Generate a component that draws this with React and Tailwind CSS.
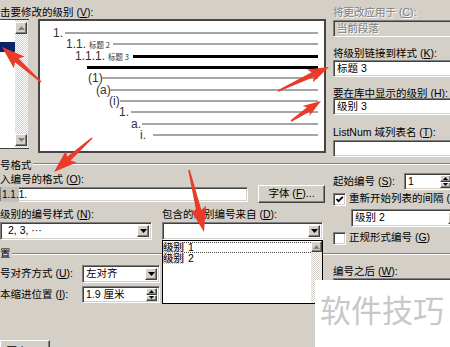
import React from 'react';

const sunken =
  'border border-t-[#808080] border-l-[#808080] border-b-white border-r-white shadow-[inset_1px_1px_0_#404040,inset_-1px_-1px_0_#d4d0c8]';
const raised =
  'border border-t-white border-l-white border-b-[#404040] border-r-[#404040] shadow-[inset_-1px_-1px_0_#808080]';
const checker =
  'bg-[image:repeating-conic-gradient(#ffffff_0%_25%,#d4d0c8_0%_50%)] bg-[length:2px_2px]';

const Tri = ({ up, color = '#000' }) => (
  <svg width="7" height="4" viewBox="0 0 7 4">
    <path d={up ? 'M0 4 L3.5 0 L7 4 Z' : 'M0 0 L7 0 L3.5 4 Z'} fill={color} />
  </svg>
);

const ArrowBtn = ({ up, color }) => (
  <div className={`${raised} bg-[#d4d0c8] w-[12px] h-[12px] shrink-0 flex items-center justify-center`}>
    <Tri up={up} color={color} />
  </div>
);

const Dropdown = ({ children, className = '' }) => (
  <div className={`${sunken} bg-white h-[18px] flex items-center pl-[3px] pr-[2px] ${className}`}>
    <span className="flex-1 overflow-hidden">{children}</span>
    <ArrowBtn />
  </div>
);

const Spin = ({ children, className = '' }) => (
  <div className={`${sunken} bg-white h-[17px] flex items-center pl-[3px] pr-[2px] ${className}`}>
    <span className="flex-1 overflow-hidden">{children}</span>
    <div className="flex flex-col w-[11px] h-[13px]">
      <div className={`${raised} flex-1 bg-[#d4d0c8] flex items-center justify-center`}>
        <svg width="5" height="3" viewBox="0 0 5 3"><path d="M0 3 L2.5 0 L5 3 Z" fill="#000" /></svg>
      </div>
      <div className={`${raised} flex-1 bg-[#d4d0c8] flex items-center justify-center`}>
        <svg width="5" height="3" viewBox="0 0 5 3"><path d="M0 0 L5 0 L2.5 3 Z" fill="#000" /></svg>
      </div>
    </div>
  </div>
);

const Check = ({ on }) => (
  <div className={`${sunken} bg-white w-[13px] h-[13px] shrink-0 flex items-center justify-center`}>
    {on && (
      <svg width="9" height="9" viewBox="0 0 9 9">
        <path d="M1.5 4 L3.5 6.2 L7.8 1.8" stroke="#000" strokeWidth="1.8" fill="none" />
      </svg>
    )}
  </div>
);

const Line = ({ dark }) =>
  dark ? <div className="flex-1 h-[3px] bg-black" /> : <div className="flex-1 h-[2px] bg-[#a6a6a6]" />;

const Preview = () => (
  <div className="ml-[9px] w-[288px] h-[134px] shrink-0 border-2 border-[#454545] bg-white pt-[6px] pr-[6px] flex flex-col font-['Liberation_Sans',sans-serif] text-[12px] text-[#333] leading-none">
    <div className="flex items-center h-[12px] pl-[13px]">
      <span className="w-[12px] shrink-0">1.</span>
      <Line />
    </div>
    <div className="flex items-center h-[10px] pl-[26px]">
      <span className="w-[47px] shrink-0">
        1.1.<span className="ml-[3px] text-[7.5px] font-['Noto_Sans_CJK_SC',sans-serif]">标题 2</span>
      </span>
      <Line />
    </div>
    <div className="flex items-center h-[14px] pl-[35px]">
      <span className="w-[58px] shrink-0">
        1.1.1.<span className="ml-[3px] text-[7.5px] font-['Noto_Sans_CJK_SC',sans-serif]">标题 3</span>
      </span>
      <Line dark />
    </div>
    <div className="flex items-center h-[8px] pl-[47px]">
      <Line dark />
    </div>
    <div className="flex items-center h-[14px] pl-[48px]">
      <span className="w-[14px] shrink-0">(1)</span>
      <Line />
    </div>
    <div className="flex items-center h-[10px] pl-[56px]">
      <span className="w-[14px] shrink-0">(a)</span>
      <Line />
    </div>
    <div className="flex items-center h-[12px] pl-[69px]">
      <span className="w-[11px] shrink-0">(i)</span>
      <Line />
    </div>
    <div className="flex items-center h-[10px] pl-[79px]">
      <span className="w-[12px] shrink-0">1.</span>
      <Line />
    </div>
    <div className="flex items-center h-[14px] pl-[91px]">
      <span className="w-[11px] shrink-0">a.</span>
      <Line />
    </div>
    <div className="flex items-center h-[8px] pl-[100px]">
      <span className="w-[13px] shrink-0">i.</span>
      <Line />
    </div>
  </div>
);

const LevelList = () => (
  <div className="w-[29px] h-[130px] shrink-0 flex border-y border-[#404040]">
    <div className="w-[15px] bg-white pt-[22px]">
      <div className="h-[10px] bg-[#0a246a]" />
    </div>
    <div className={`w-[13px] flex flex-col py-[2px] ${checker}`}>
      <ArrowBtn up color="#808080" />
      <div className="flex-1" />
      <ArrowBtn color="#808080" />
    </div>
  </div>
);

const arrowPoints = (x1, y1, x2, y2, hl, hw) => {
  const dx = x2 - x1;
  const dy = y2 - y1;
  const len = Math.hypot(dx, dy);
  const ux = dx / len;
  const uy = dy / len;
  const px = -uy;
  const py = ux;
  const bx = x2 - ux * hl;
  const by = y2 - uy * hl;
  const p = (x, y) => `${x.toFixed(1)},${y.toFixed(1)}`;
  return [
    p(x1 + px * 0.8, y1 + py * 0.8),
    p(bx + px * 2.6, by + py * 2.6),
    p(bx - ux * 3 + px * hw, by - uy * 3 + py * hw),
    p(x2, y2),
    p(bx - ux * 3 - px * hw, by - uy * 3 - py * hw),
    p(bx - px * 2.6, by - py * 2.6),
    p(x1 - px * 0.8, y1 - py * 0.8),
  ].join(' ');
};

const ARROWS = [
  [41, 82, 2, 47, 20, 8],
  [92, 138, 54, 172, 20, 8],
  [278, 91, 329, 67, 18, 7],
  [291, 121, 321, 101, 15, 6],
  [189, 170, 204, 232, 22, 8],
];

export default function App() {
  return (
    <div className="relative w-[450px] h-[347px] overflow-hidden bg-[#d4d0c8] text-black text-[10.5px] font-['Liberation_Sans','Noto_Sans_CJK_SC',sans-serif] whitespace-nowrap">
      {/* top part */}
      <div className="flex h-[157px]">
        <div className="w-[327px] shrink-0">
          <div className="h-[19px] pt-[5px] leading-[14px]">
            击要修改的级别 (<u>V</u>):
          </div>
          <div className="flex items-start">
            <LevelList />
            <Preview />
          </div>
        </div>
        <div className="ml-[6px] w-[130px] shrink-0 flex flex-col">
          <div className="h-[20px] pt-[5px] leading-[14px] text-[#808080] [text-shadow:1px_1px_0_#fff]">
            将更改应用于 (<u>C</u>):
          </div>
          <div className={`${sunken} h-[17px] bg-[#d4d0c8] pl-[3px] flex items-center text-[#808080] [text-shadow:1px_1px_0_#fff]`}>
            当前段落
          </div>
          <div className="h-[23px] pt-[9px] leading-[14px]">
            将级别链接到样式 (<u>K</u>):
          </div>
          <div className={`${sunken} h-[17px] bg-white pl-[3px] flex items-center`}>标题 3</div>
          <div className="h-[21px] pt-[9px] leading-[14px]">
            要在库中显示的级别 (<u>H</u>):
          </div>
          <div className={`${sunken} h-[17px] bg-white pl-[3px] flex items-center`}>级别 3</div>
          <div className="h-[25px] pt-[10px] leading-[14px]">
            ListNum 域列表名 (<u>T</u>):
          </div>
          <div className={`${sunken} h-[17px] bg-white`} />
        </div>
      </div>

      {/* 编号格式 group */}
      <div className="flex h-[16px]">
        <span className="leading-[16px]">号格式</span>
        <div className="flex-1 ml-[1px] mt-[6px] h-[2px] border-t border-t-[#808080] border-b border-b-white" />
      </div>

      <div className="flex">
        <div className="w-[327px] shrink-0">
          <div className="h-[12px] leading-[12px]">
            入编号的格式 (<u>O</u>):
          </div>
          <div className="flex items-center h-[18px]">
            <div className={`${sunken} w-[248px] h-[15px] bg-white flex items-center font-['Liberation_Sans',sans-serif] text-[10px]`}>
              <span className="bg-[#c0c0c0] pl-[1px]">1.1.</span>
              <span>1.</span>
            </div>
            <div className={`${raised} ml-[10px] w-[67px] h-[18px] bg-[#d4d0c8] flex items-center justify-center`}>
              字体 (<u>F</u>)...
            </div>
          </div>
          <div className="flex h-[19px] pt-[4px] leading-[14px]">
            <span className="w-[162px] shrink-0">
              级别的编号样式 (<u>N</u>):
            </span>
            <span>
              包含的级别编号来自 (<u>D</u>):
            </span>
          </div>
          <div className="flex h-[18px]">
            <Dropdown className="w-[152px]">
              <span className="pl-[4px]">2, 3, ···</span>
            </Dropdown>
            <div className="relative ml-[10px] w-[161px]">
              <Dropdown className="w-[161px]" />
              <div className="absolute left-0 top-full z-10 w-[161px] h-[64px] bg-white border border-black flex">
                <div className="flex-1 flex flex-col pt-[1px] leading-[11px]">
                  <div className="h-[11px] border-y border-dotted border-[#404040] flex items-center">
                    <span className="bg-[image:repeating-conic-gradient(#b8b8b8_0%_25%,#ffffff_0%_50%)] bg-[length:2px_2px]">级别</span>
                    <span className="ml-[4px]">1</span>
                  </div>
                  <div className="h-[11px] flex items-center">
                    <span className="bg-[image:repeating-conic-gradient(#b8b8b8_0%_25%,#ffffff_0%_50%)] bg-[length:2px_2px]">级别</span>
                    <span className="ml-[4px]">2</span>
                  </div>
                </div>
                <div className={`w-[11px] flex flex-col ${checker}`}>
                  <div className={`${raised} bg-[#d4d0c8] h-[11px] flex items-center justify-center`}>
                    <Tri up color="#808080" />
                  </div>
                </div>
              </div>
            </div>
          </div>
        </div>
        <div className="ml-[6px] w-[130px] shrink-0 flex flex-col">
          <div className="flex items-center h-[17px]">
            <span className="w-[71px] shrink-0">
              起始编号 (<u>S</u>):
            </span>
            <Spin className="w-[50px]">1</Spin>
          </div>
          <div className="flex items-center h-[18px]">
            <Check on />
            <span className="ml-[3px]">
              重新开始列表的间隔 (<u>R</u>):
            </span>
          </div>
          <Dropdown className="mt-[1px] ml-[18px] w-[112px]">级别 2</Dropdown>
          <div className="flex items-center h-[18px] mt-[2px]">
            <Check />
            <span className="ml-[3px]">
              正规形式编号 (<u>G</u>)
            </span>
          </div>
        </div>
      </div>

      {/* 编号位置 group */}
      <div className="flex h-[12px]">
        <span className="leading-[12px]">置</span>
        <div className="flex-1 ml-[1px] mt-[6px] h-[2px] border-t border-t-[#808080] border-b border-b-white" />
      </div>

      <div className="flex">
        <div className="w-[327px] shrink-0">
          <div className="flex items-center h-[17px] mt-[6px]">
            <span className="w-[82px] shrink-0">
              号对齐方式 (<u>U</u>):
            </span>
            <Dropdown className="w-[78px] h-[17px]">左对齐</Dropdown>
          </div>
          <div className="flex items-center h-[17px] mt-[4px]">
            <span className="w-[82px] shrink-0">
              本缩进位置 (<u>I</u>):
            </span>
            <Spin className="w-[78px]">1.9 厘米</Spin>
          </div>
          <div className={`${raised} mt-[37px] w-[50px] h-[22px] bg-[#d4d0c8] flex items-start justify-center pt-[3px]`}>
            更少 (<u>L</u>)
          </div>
        </div>
        <div className="ml-[6px] w-[130px] shrink-0 flex flex-col">
          <div className="h-[19px] pt-[5px] leading-[14px]">
            编号之后 (<u>W</u>):
          </div>
          <Dropdown className="w-[130px]" />
        </div>
      </div>

      {/* watermark */}
      <div className="absolute left-[315px] top-[280px] z-20 w-[135px] h-[67px] bg-white pt-[13px] pl-[5px] text-[31px] leading-none text-[#c8c8c8] font-['Noto_Sans_CJK_SC',sans-serif]">
        软件技巧
      </div>

      {/* red annotation arrows */}
      <svg className="absolute left-0 top-0 z-30 pointer-events-none" width="450" height="347" viewBox="0 0 450 347">
        {ARROWS.map((a, i) => (
          <polygon key={i} points={arrowPoints(...a)} fill="#ea3a28" />
        ))}
      </svg>
    </div>
  );
}
